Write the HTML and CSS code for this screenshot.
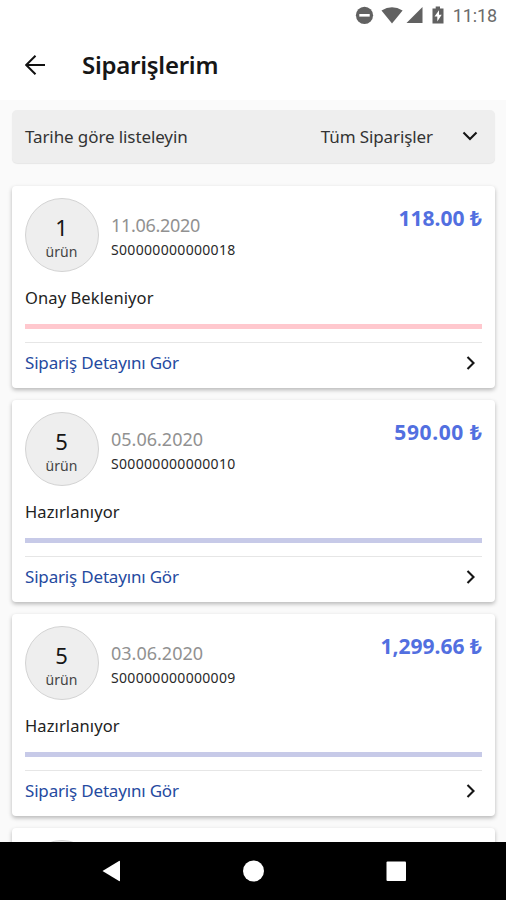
FILE: index.html
```html
<!DOCTYPE html>
<html lang="tr">
<head>
<meta charset="utf-8">
<title>Siparişlerim</title>
<link rel="stylesheet" href="styles.css">
</head>
<body>
<div class="statusbar">
  <svg class="status-icons" width="90" height="20" viewBox="0 0 90 20">
    <circle cx="9.5" cy="10.3" r="8.6"/>
    <rect class="cut" x="4.3" y="9" width="10.4" height="2.6"/>
    <path d="M26.5 5.6Q37 -1.2 47.6 5.6L37 18.4Z"/>
    <path d="M67.500 2V18H51.500Z"/>
    <path d="M77.500 3.500H80.700V1.500H85V3.500H88.500V18.500H77.500Z"/>
    <path class="cut" d="M84 5.300L79.500 11.600H82.300V16.400L86.700 9.800H84Z"/>
  </svg>
  <span class="clock">11:18</span>
</div>
<header class="header">
  <svg class="back" width="20" height="20" viewBox="0 0 20 20"><path d="M20 10H1.500M10.500 0.800L1.200 10L10.500 19.200"/></svg>
  <h1 class="title">Siparişlerim</h1>
</header>
<main class="content">
  <div class="filter">
    <span class="filter-label">Tarihe göre listeleyin</span>
    <span class="filter-value">Tüm Siparişler</span>
    <svg class="chevron" width="16" height="10" viewBox="0 0 16 10"><path d="M1.500 1.500L8 8L14.500 1.500"/></svg>
  </div>
  <article class="card pending">
    <div class="top">
      <div class="count"><span class="number">1</span><span class="unit">ürün</span></div>
      <div class="info"><span class="date">11.06.2020</span><span class="code">S00000000000018</span></div>
      <span class="price">118.00 ₺</span>
    </div>
    <div class="state">Onay Bekleniyor</div>
    <div class="bar"></div>
    <a class="link"><span class="link-text">Sipariş Detayını Gör</span><svg class="chevron" width="10" height="14" viewBox="0 0 10 14"><path d="M1.500 1L7.500 7L1.500 13"/></svg></a>
  </article>
  <article class="card">
    <div class="top">
      <div class="count"><span class="number">5</span><span class="unit">ürün</span></div>
      <div class="info"><span class="date wide">05.06.2020</span><span class="code">S00000000000010</span></div>
      <span class="price wide">590.00 ₺</span>
    </div>
    <div class="state">Hazırlanıyor</div>
    <div class="bar"></div>
    <a class="link"><span class="link-text">Sipariş Detayını Gör</span><svg class="chevron" width="10" height="14" viewBox="0 0 10 14"><path d="M1.500 1L7.500 7L1.500 13"/></svg></a>
  </article>
  <article class="card">
    <div class="top">
      <div class="count"><span class="number">5</span><span class="unit">ürün</span></div>
      <div class="info"><span class="date wide">03.06.2020</span><span class="code">S00000000000009</span></div>
      <span class="price">1,299.66 ₺</span>
    </div>
    <div class="state">Hazırlanıyor</div>
    <div class="bar"></div>
    <a class="link"><span class="link-text">Sipariş Detayını Gör</span><svg class="chevron" width="10" height="14" viewBox="0 0 10 14"><path d="M1.500 1L7.500 7L1.500 13"/></svg></a>
  </article>
  <article class="card">
    <div class="top"><div class="count"></div></div>
  </article>
</main>
<nav class="navbar">
  <svg width="506" height="58" viewBox="0 0 506 58"><path d="M102.500 29L119 19Q120 18.500 120 19.500V38.500Q120 39.500 119 39Z"/><circle cx="253.500" cy="29" r="10.500"/><rect x="386.500" y="19.500" width="19.500" height="19.500" rx="1"/></svg>
</nav>
</body>
</html>
```
FILE: styles.css
```css
* { box-sizing: border-box; }
body {
  margin: 0;
  width: 506px;
  height: 900px;
  overflow: hidden;
  display: flex;
  flex-direction: column;
  background: #fafafa;
  font-family: "Noto Sans", sans-serif;
  color: #161616;
  white-space: nowrap;
}
svg { display: block; flex: none; }
.statusbar {
  height: 32px;
  flex: none;
  background: #fff;
  display: flex;
  align-items: center;
  justify-content: flex-end;
  gap: 8px;
  padding: 0 9px 0 0;
}
.status-icons { fill: #616161; margin-top: -2px; }
.status-icons .cut { fill: #fff; }
.clock { font: 18px/32px Roboto, sans-serif; color: #6b6b6b; letter-spacing: -0.1px; }
.header {
  height: 68px;
  flex: none;
  background: #fff;
  display: flex;
  align-items: center;
  padding: 0 0 2px 25px;
  gap: 37px;
}
.back { fill: none; stroke: #111; stroke-width: 2; }
.title { margin: 0; font-size: 24px; line-height: 32px; font-weight: 600; letter-spacing: -0.25px; }
.content { flex: 1; min-height: 0; overflow: hidden; padding: 10px 11px 0 12px; }
.filter {
  height: 53px;
  margin-bottom: 23px;
  padding: 0 17px 1px 13px;
  display: flex;
  align-items: center;
  background: #eee;
  border-radius: 5px;
  box-shadow: 0 1px 1px rgba(0,0,0,.08);
  font-size: 17px;
}
.filter-label { flex: 1; color: #333; letter-spacing: -0.1px; }
.filter-value { color: #333; margin-right: 29px; letter-spacing: -0.1px; }
.chevron { fill: none; stroke: #151515; stroke-width: 2.1; }
.card {
  height: 202px;
  margin-bottom: 12px;
  padding: 12px 13px 0;
  background: #fff;
  border-radius: 4px;
  box-shadow: 0 2px 4px rgba(0,0,0,.27);
}
.top { display: flex; height: 75px; }
.count {
  width: 74px;
  height: 74px;
  flex: none;
  border: 1px solid #d3d3d3;
  border-radius: 50%;
  background: #eee;
  display: flex;
  flex-direction: column;
  align-items: center;
  padding: 15px 1px 0 0;
}
.number { font-size: 22px; line-height: 26px; }
.unit { font-size: 14px; line-height: 23px; color: #444; letter-spacing: 0.1px; }
.info { flex: 1; padding: 15px 0 0 12px; display: flex; flex-direction: column; align-items: flex-start; }
.date { font-size: 18px; line-height: 24px; color: #919191; letter-spacing: -0.3px; }
.date.wide { letter-spacing: 0; }
.code { font-size: 14px; line-height: 26px; color: #292929; letter-spacing: 0.32px; }
.price { font-size: 21px; line-height: 40px; font-weight: 700; color: #526fe0; }
.price.wide { letter-spacing: 0.6px; margin-right: -0.6px; }
.state { margin-top: 13px; height: 24px; line-height: 24px; font-size: 16.500px; letter-spacing: 0.1px; color: #222; }
.bar { margin-top: 14px; height: 5px; background: #c7cae8; }
.pending .bar { background: #ffc8ce; }
.link {
  margin-top: 13px;
  height: 41px;
  display: flex;
  align-items: center;
  justify-content: space-between;
  border-top: 1px solid #e6e6e6;
  padding: 0 6px 1px 0;
  color: #254aa0;
  font-size: 17px;
  letter-spacing: -0.18px;
}
.navbar { height: 58px; flex: none; background: #000; }
.navbar svg { fill: #fff; }
```
